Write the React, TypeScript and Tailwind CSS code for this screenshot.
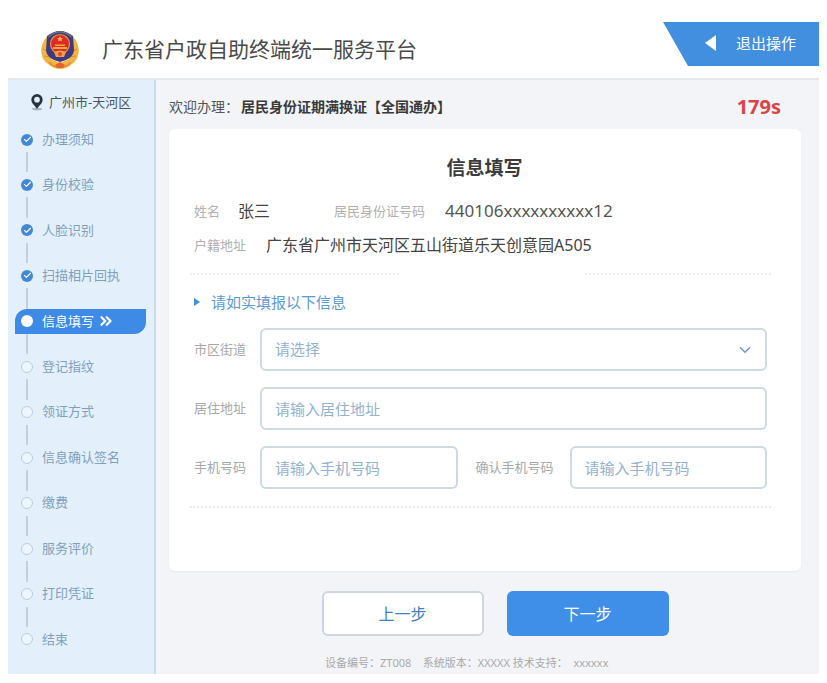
import { FiCheck, FiChevronDown, FiChevronsRight } from "react-icons/fi"

const steps = [
    "办理须知",
    "身份校验",
    "人脸识别",
    "扫描相片回执",
    "信息填写",
    "登记指纹",
    "领证方式",
    "信息确认签名",
    "缴费",
    "服务评价",
    "打印凭证",
    "结束",
]

const current = 4

const fieldClass =
    "h-[43px] w-full rounded-md border-2 border-[#cddae0] bg-white px-[13px] text-[15px] text-[#93b3d0] outline-none placeholder:text-[#93b3d0]"

function Emblem() {
    return (
        <svg viewBox="0 0 40 40" className="h-10 w-10" aria-hidden="true">
            <path d="M8 6C-1 14-1 28 8 34c3 3 8 5 12 5s9-2 12-5c9-6 9-20 0-28l-3 5v18l-9 4-9-4V11z" fill="#f0b544" />
            <path d="M3 19l7 3M4 26l7 1M37 19l-7 3M36 26l-7 1" stroke="#d98e2b" strokeWidth="1.2" />
            <path d="M9 32c3 4 7 5 11 5s8-1 11-5" fill="none" stroke="#e88f3a" strokeWidth="2" />
            <path d="M20 1c5 0 9 2 13 5l1 14c0 5-5 10-14 12C11 30 6 25 6 20L7 6c4-3 8-5 13-5z" fill="#3f3a80" />
            <path d="M8 7c4-3 8-5 12-5s8 2 12 5" fill="none" stroke="#5f7484" strokeWidth="1.5" />
            <circle cx="20" cy="14" r="9.500" fill="#dc2a24" stroke="#e8913f" strokeWidth="1.2" />
            <path d="M20 6l1 2h2l-1.500 1.500.5 2-2-1-2 1 .5-2L17 8h2z" fill="#ffb04a" />
            <path d="M13 17h14v2H13zM15 14.500h10v1.500H15z" fill="#f6a544" />
            <path d="M14 22c4-2 8-2 12 0l-2 5h-8z" fill="#f0a04a" />
            <circle cx="20" cy="24" r="2" fill="#d8492f" />
            <path d="M15 35l5-3 5 3-2 3h-6z" fill="#e3632e" />
        </svg>
    )
}

function StepMarker({ index }: { index: number }) {
    if (index < current) {
        return (
            <span className="flex h-3 w-3 items-center justify-center rounded-full bg-[#4189d8] text-white">
                <FiCheck size={9} strokeWidth={3} />
            </span>
        )
    }
    if (index === current) {
        return <span className="h-3 w-3 rounded-full bg-white" />
    }
    return <span className="h-3 w-3 rounded-full border border-[#b9cddb] bg-[#eef6fd]" />
}

function Sidebar() {
    return (
        <aside className="flex w-[148px] shrink-0 flex-col border-r-2 border-[#c9dde8] bg-[#e3f0fc] pr-2 pb-[22px] pl-[7px]">
            <div className="flex h-[47px] items-start gap-[5px] pt-2.5 pl-[15px] text-[#4a5560]">
                <svg viewBox="0 0 14 18" className="mt-1 h-[17px] w-[14px]" aria-hidden="true">
                    <ellipse cx="7" cy="16" rx="5.500" ry="1.500" fill="#aab6c0" />
                    <path d="M7 0a6 6 0 0 0-6 6c0 4 4 6 6 10 2-4 6-6 6-10a6 6 0 0 0-6-6zm0 3a3 3 0 1 1 0 6 3 3 0 0 1 0-6z" fill="#27323d" fillRule="evenodd" />
                </svg>
                <span className="text-[13px] leading-6 whitespace-nowrap">广州市-天河区</span>
            </div>
            <ol className="flex flex-1 flex-col">
                {steps.map((step, index) => (
                    <li key={step} className={index < steps.length - 1 ? "flex flex-1 flex-col" : "flex flex-col"}>
                        <div
                            aria-current={index === current ? "step" : undefined}
                            className={
                                index === current
                                    ? "flex h-[25px] items-center gap-[9px] rounded-tl-xl rounded-br-xl bg-[#3d8be6] pl-1.5 text-[13px] text-white"
                                    : "flex h-[25px] items-center gap-[9px] pl-1.5 text-[13px] text-[#7fa0bd]"
                            }
                        >
                            <StepMarker index={index} />
                            <span>{step}</span>
                            {index === current && <FiChevronsRight size={18} strokeWidth={3} className="-ml-1.5" />}
                        </div>
                        {index < steps.length - 1 && <div className="ml-[11px] w-0.5 flex-1 bg-[#c0d0dc]" />}
                    </li>
                ))}
            </ol>
        </aside>
    )
}

function InfoForm() {
    return (
        <form className="rounded-md bg-white pt-[25px] pr-[34px] pb-[63px] pl-[25px] shadow-xs">
            <h1 className="pl-2 text-center text-[19px] leading-7 font-bold text-[#3a3a3a]">信息填写</h1>
            <dl className="mt-[17px] text-base leading-6 text-[#444]">
                <div className="flex items-center">
                    <dt className="text-[13px] text-[#b0b0b0]">姓名</dt>
                    <dd className="ml-[18px]">张三</dd>
                    <dt className="ml-16 text-[13px] text-[#b0b0b0]">居民身份证号码</dt>
                    <dd className="ml-5 text-[17px] text-[#555]">440106xxxxxxxxxx12</dd>
                </div>
                <div className="mt-2.5 flex items-center">
                    <dt className="text-[13px] text-[#b0b0b0]">户籍地址</dt>
                    <dd className="ml-5">广东省广州市天河区五山街道乐天创意园A505</dd>
                </div>
            </dl>
            <div className="-mx-1 mt-4 flex justify-between">
                <span className="w-[36%] border-t-2 border-dotted border-[#eceff2]" />
                <span className="w-[32%] border-t-2 border-dotted border-[#eceff2]" />
            </div>
            <h2 className="mt-[17px] flex items-center gap-[11px] text-[15px] leading-5 text-[#5b9bd3]">
                <svg viewBox="0 0 6 8" className="h-2 w-1.5" aria-hidden="true">
                    <path d="M0 0l6 4-6 4z" fill="#3f8fd6" />
                </svg>
                请如实填报以下信息
            </h2>
            <div className="mt-4 flex flex-col gap-4 text-[13px] text-[#a8a8a8]">
                <div className="flex items-center">
                    <label htmlFor="street" className="w-[66px] shrink-0">市区街道</label>
                    <div className="relative flex-1">
                        <select id="street" className={fieldClass + " appearance-none"} defaultValue="">
                            <option value="">请选择</option>
                        </select>
                        <FiChevronDown size={18} strokeWidth={2} className="pointer-events-none absolute top-[13px] right-[13px] text-[#6f9cc3]" />
                    </div>
                </div>
                <div className="flex items-center">
                    <label htmlFor="address" className="w-[66px] shrink-0">居住地址</label>
                    <input id="address" type="text" placeholder="请输入居住地址" className={fieldClass} />
                </div>
                <div className="flex items-center">
                    <label htmlFor="phone" className="w-[66px] shrink-0">手机号码</label>
                    <input id="phone" type="tel" placeholder="请输入手机号码" className={fieldClass + " min-w-0 flex-1"} />
                    <label htmlFor="phone-confirm" className="ml-[18px] w-[94px] shrink-0">确认手机号码</label>
                    <input id="phone-confirm" type="tel" placeholder="请输入手机号码" className={fieldClass + " min-w-0 flex-1"} />
                </div>
            </div>
            <div className="-mx-1 mt-[17px] border-t-2 border-dotted border-[#e8ebee]" />
        </form>
    )
}

export default function App() {
    return (
        <div className="min-h-screen bg-white px-2 pt-[22px] pb-[9px] font-['Noto_Sans','Noto_Sans_CJK_SC',sans-serif]">
            <header className="flex h-14 items-start justify-between pl-8">
                <div className="flex h-14 items-center gap-[22px]">
                    <Emblem />
                    <span className="text-[21px] text-[#4a4a4a]">广东省户政自助终端统一服务平台</span>
                </div>
                <button
                    type="button"
                    className="flex h-11 w-[156px] items-center gap-5 bg-[#428fdf] pb-0.5 pl-[42px] text-[15px] text-white [clip-path:polygon(0_0,100%_0,100%_100%,25px_100%)]"
                >
                    <svg viewBox="0 0 11 16" className="h-4 w-[11px]" aria-hidden="true">
                        <path d="M11 0v16L0 8z" fill="currentColor" />
                    </svg>
                    退出操作
                </button>
            </header>
            <div className="flex border-t-2 border-[#e3e6e9]">
                <Sidebar />
                <main className="flex-1 bg-[#f3f4f7] pr-[18px] pl-[13px]">
                    <div className="flex h-[49px] items-center justify-between pt-1 pr-5">
                        <p className="text-sm text-[#555]">
                            欢迎办理：<strong className="ml-0.5 text-[#3a3a3a]">居民身份证期满换证【全国通办】</strong>
                        </p>
                        <span className="text-xl font-bold text-[#dc4346]">179s</span>
                    </div>
                    <InfoForm />
                    <div className="mt-5 flex justify-center gap-[23px] pl-5 text-base">
                        <button type="button" className="h-[45px] w-[162px] rounded-md border-2 border-[#cdd5e2] bg-white text-[#3f7fc8]">
                            上一步
                        </button>
                        <button type="button" className="h-[45px] w-[162px] rounded-md bg-[#3f8ee8] text-white">
                            下一步
                        </button>
                    </div>
                    <footer className="mt-[17px] pb-px pl-[156px] text-[11px] leading-5 whitespace-pre text-[#aaa]">
                        设备编号：ZT008    系统版本：XXXXX 技术支持：  xxxxxx
                    </footer>
                </main>
            </div>
        </div>
    )
}
